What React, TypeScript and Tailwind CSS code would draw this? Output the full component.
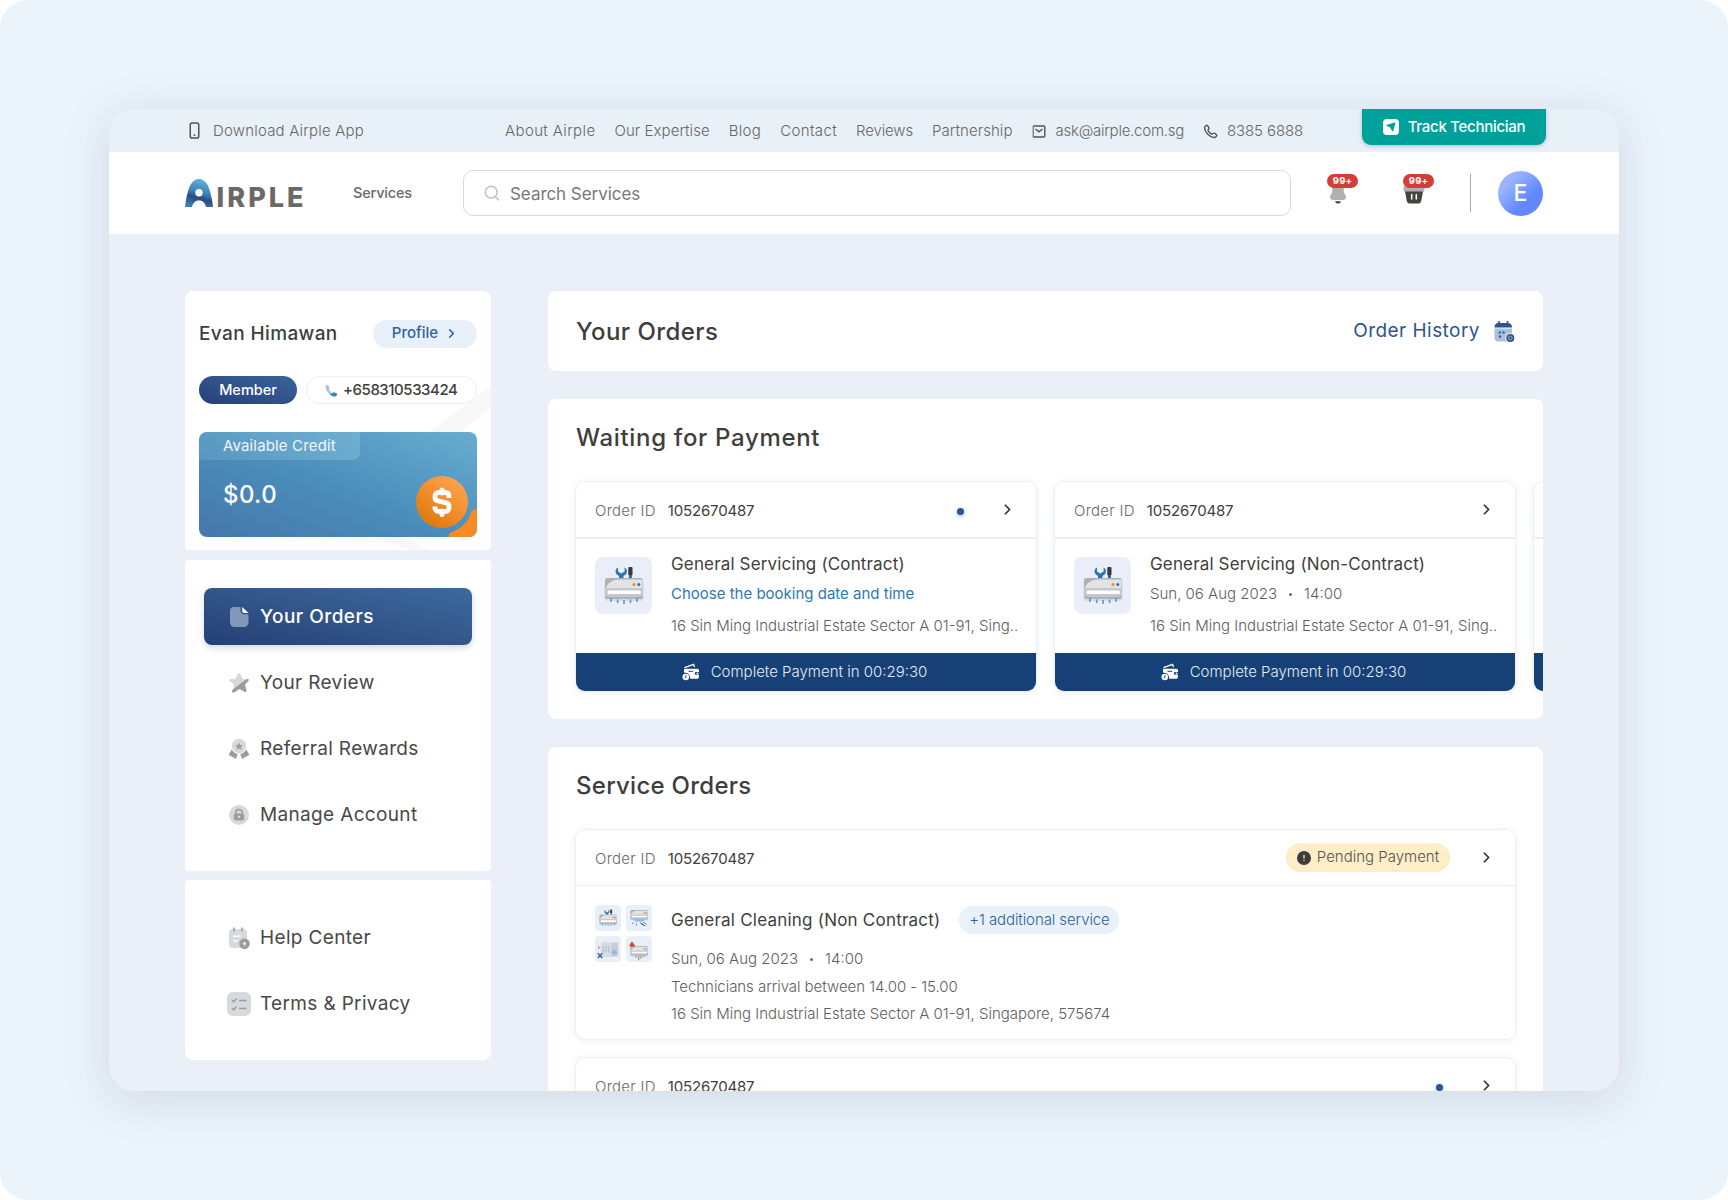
import React from 'react';
import { ChevronRight } from 'lucide-react';

interface OrderSummary {
  id: string;
  title: string;
  schedule: React.ReactNode;
  unread?: boolean;
}

const ORDER_ID = '1052670487';

const NAV_LINKS = [
  { label: 'About Airple', className: 'tracking-[0.025em]' },
  { label: 'Our Expertise', className: 'tracking-[0.004em]' },
  { label: 'Blog', className: 'tracking-[0.02em]' },
  { label: 'Contact', className: 'tracking-[0.025em]' },
  { label: 'Reviews', className: 'tracking-[-0.009em]' },
  { label: 'Partnership', className: 'tracking-[0.004em]' },
];

/* ---------- Icons ---------- */

const Logo = () => (
  <svg className="shrink-0" width="124" height="30" viewBox="0 0 124 30" fill="none">
    <defs>
      <linearGradient id="logo" x1="18" y1="0" x2="10" y2="29" gradientUnits="userSpaceOnUse">
        <stop stopColor="#6cb9d8" />
        <stop offset="0.5" stopColor="#3a80b8" />
        <stop offset="0.68" stopColor="#2b4a85" />
        <stop offset="1" stopColor="#3f7db4" />
      </linearGradient>
    </defs>
    <path
      fillRule="evenodd"
      d="M0 29C1 20 3 11 6 6C8 3 10.500 1 14 1S20 3 22 6C25 11 27 20 28 29H21C20 25 18 22.500 14 22.500S8 25 7 29ZM14 11A3.700 3.700 0 1 0 14 18.400A3.700 3.700 0 1 0 14 11Z"
      fill="url(#logo)"
    />
    <text x="31.500" y="28.500" fontSize="27" fontWeight="800" textLength="87" lengthAdjust="spacing" fill="#6b6967">
      IRPLE
    </text>
  </svg>
);

const PhoneDeviceIcon = () => (
  <svg width="11" height="17" viewBox="0 0 11 17" fill="none">
    <rect x="1.250" y="1" width="8.500" height="15" rx="1.800" stroke="#55534f" strokeWidth="1.500" />
    <circle cx="5.500" cy="13.200" r="0.900" fill="#55534f" />
  </svg>
);

const MailIcon = () => (
  <svg width="14" height="13" viewBox="0 0 14 13" fill="none" stroke="#55534f" strokeWidth="1.400">
    <path d="M1.200 1H11.800C12.400 1 12.800 1.400 12.800 2V11C12.800 11.600 12.400 12 11.800 12H1.200" />
    <path d="M1.200 1V12" strokeWidth="1" />
    <path d="M3.500 4L7 6.800L10.500 4" />
  </svg>
);

const HandsetIcon = () => (
  <svg width="15" height="15" viewBox="0 0 24 24" fill="none" stroke="#55534f" strokeWidth="2.200" strokeLinejoin="round">
    <path d="M3 4.500C4 2.500 5.500 1.500 6.500 2.200C8 3.300 9.500 5.500 9.500 6.800C9.500 8.300 7.500 8.500 8 10C8.800 12.300 11.500 15.200 13.800 16C15.500 16.500 15.700 14.500 17.200 14.500C18.500 14.500 21 16.300 21.900 17.600C22.600 18.700 21.300 20.500 19.500 21.200C12.500 23.500 0.500 11.500 3 4.500Z" />
  </svg>
);

const TrackIcon = () => (
  <svg width="16" height="16" viewBox="0 0 16 16">
    <rect width="16" height="16" rx="4" fill="#fff" />
    <path d="M11.700 3.600C12.200 3.500 12.500 3.800 12.400 4.300L10.200 12C10 12.600 9.300 12.600 9 12.100L7.600 9.200C7.400 8.800 7.100 8.500 6.700 8.300L3.900 7C3.300 6.700 3.300 6 4 5.800Z" fill="#00a19b" />
  </svg>
);

const SearchIcon = () => (
  <svg width="16" height="16" viewBox="0 0 16 16" fill="none" stroke="#bfc3c9" strokeWidth="1.500" strokeLinecap="round">
    <circle cx="7.200" cy="7.200" r="5.900" />
    <path d="M11.500 11.700L14.500 15" />
  </svg>
);

const BellIcon = () => (
  <svg width="18" height="20" viewBox="0 0 18 20">
    <path d="M3.500 1H14.500L14.800 7.500C15 9.500 17 11 17 13C17 15 15.500 16 13.500 16H4.500C2.500 16 1 15 1 13C1 11 3 9.500 3.200 7.500Z" fill="#b0b0b0" />
    <path d="M6 17.200H12C11.500 18.800 10.500 19.500 9 19.500S6.500 18.800 6 17.200Z" fill="#454341" />
  </svg>
);

const BasketIcon = () => (
  <svg width="22" height="20" viewBox="0 0 22 20">
    <rect x="0.500" y="1.500" width="21" height="6.500" rx="2" fill="#b0b0b0" />
    <path d="M2 7.500H20L18.300 16.500C18 18.400 17 19.500 15.500 19.500H6.500C5 19.500 4 18.400 3.700 16.500Z" fill="#454341" />
    <path d="M8.700 10.500V15M13.300 10.500V15" stroke="#fff" strokeWidth="1.600" strokeLinecap="round" />
  </svg>
);

const SmallPhoneIcon = () => (
  <svg width="13" height="13" viewBox="0 0 13 13">
    <path d="M0.500 3C0.500 1.200 2 0.300 3 1.200L4.400 3C5 4 3.800 4.600 4.100 5.400C4.700 6.700 6 8 7.300 8.900L4.700 10.200C2.500 8.500 0.600 5.500 0.500 3Z" fill="#b5c3d6" />
    <path d="M4.700 10.200L7.300 8.900C8.200 9.300 8.700 8 9.700 8.400L11.700 9.600C12.800 10.400 12 12 10.500 12.500C8.500 12.900 6.500 12 4.700 10.200Z" fill="#3c82bb" />
  </svg>
);

const CoinIcon = () => (
  <svg className="absolute right-0 bottom-0" width="68" height="66" viewBox="0 0 68 66">
    <defs>
      <linearGradient id="coin" x1="50" y1="8" x2="20" y2="50" gradientUnits="userSpaceOnUse">
        <stop stopColor="#f8a352" />
        <stop offset="0.400" stopColor="#f79434" />
        <stop offset="1" stopColor="#df7c12" />
      </linearGradient>
    </defs>
    <path d="M62.500 40.500C63.500 38.500 65 38 68 38.500V66H40.500C39 63.500 40.500 62 43 61C52.500 57.500 60 50 62.500 40.500Z" fill="#f68b25" />
    <circle cx="33" cy="31" r="26" fill="url(#coin)" />
    <path d="M40 27V25.500C40 22.800 38.500 21.500 36 21.500H30C27.500 21.500 26 23 26 25V26.500C26 28.500 27 29.500 28.800 29.900L37.200 31.800C39 32.200 40 33.300 40 35.200V36.800C40 39 38.500 40.400 36.300 40.400H29.800C27.500 40.400 26 39 26 36.800V35.500" fill="none" stroke="#fff" strokeWidth="4.800" />
    <path d="M33 19V22M33 40V43.500" stroke="#fff" strokeWidth="5" strokeLinecap="round" />
  </svg>
);

const DocIcon = () => (
  <svg width="24" height="24" viewBox="0 0 24 24">
    <path d="M7 2H13.500V5.500C13.500 8 15 9.300 17.500 9.300H21.500V17C21.500 20 19.500 22 16.500 22H8C5 22 3 20 3 17V6C3 3.500 4.500 2 7 2Z" fill="#8198bb" />
    <path d="M15.200 2L21.500 8H17.500C16 8 15.200 7.200 15.200 5.800Z" fill="#fff" />
  </svg>
);

const ReviewIcon = () => (
  <svg width="24" height="24" viewBox="0 0 24 24">
    <path d="M10.500 3C11.200 1.700 12.800 1.700 13.400 3L15.200 7.300C15.400 7.800 15.800 8 16.300 8L18 8.200L5.800 18.200L7 14.500C7.200 13.800 7 13.300 6.500 12.900L2.800 10.200C1.600 9.200 2.200 8 3.700 7.900L7.700 7.700C8.400 7.700 8.800 7.400 9 6.900Z" fill="#d6dadd" />
    <path d="M17.500 9.200C19.800 7.600 22 8 21.900 9C21.800 10.200 19 12.300 18.300 13.300C18 13.800 18 14.200 18.200 14.800L19.500 19C19.900 20.800 18.600 21.600 17.300 20.800L13.500 18.500C12.800 18.100 12.200 18.100 11.600 18.500L8.500 20.700C7 21.500 5 22 4.900 20.500C5 19.300 6 18.300 7.500 17Z" fill="#9c9c9c" />
  </svg>
);

const RewardIcon = () => (
  <svg width="24" height="24" viewBox="0 0 24 24">
    <path d="M5.500 12L10.500 16.500L8.500 21.500L6.500 20L2.200 17.800ZM18.500 12L13.500 16.500L15.500 21.500L17.500 20L21.800 17.800Z" fill="#9c9c9c" stroke="#9c9c9c" strokeLinejoin="round" />
    <circle cx="12" cy="9" r="7.700" fill="#d6dadd" stroke="#fff" strokeWidth="1" />
    <path d="M12 5.500L13.200 8L15.800 8.300L13.900 10.200L14.400 12.800L12 11.500L9.600 12.800L10.100 10.200L8.200 8.300L10.800 8Z" fill="#9c9c9c" />
  </svg>
);

const AccountIcon = () => (
  <svg width="24" height="24" viewBox="0 0 24 24">
    <circle cx="12" cy="12" r="10" fill="#d6dadd" />
    <path d="M8.700 11V9.500C8.700 7.500 10 6.400 12 6.400S15.300 7.500 15.300 9.500V11" fill="none" stroke="#9c9c9c" strokeWidth="1.500" />
    <rect x="6.800" y="10.500" width="10.400" height="7" rx="2" fill="#9c9c9c" />
    <circle cx="12" cy="13.900" r="1.200" fill="#d6dadd" />
  </svg>
);

const HelpIcon = () => (
  <svg width="24" height="24" viewBox="0 0 24 24">
    <rect x="2" y="3" width="18" height="19" rx="4" fill="#d6dadd" />
    <path d="M7 1.500V5.500M15 1.500V5.500" stroke="#9c9c9c" strokeWidth="1.600" />
    <path d="M6.500 10.200H13.500M6.500 15H10.500" stroke="#fff" strokeWidth="1.400" />
    <circle cx="17.500" cy="17.700" r="5.300" fill="#9c9c9c" />
    <path d="M17.500 16V19.400M15.800 17.700H19.200" stroke="#fff" strokeWidth="1.100" />
  </svg>
);

const TermsIcon = () => (
  <svg width="24" height="24" viewBox="0 0 24 24">
    <rect width="24" height="24" rx="6" fill="#d6dadd" />
    <path d="M5 8.300L6.800 9.800L9.500 6.500M5 16.300L6.800 17.800L9.500 14.500M12 8.500H19.500M12 16.500H19.500" fill="none" stroke="#9c9c9c" strokeWidth="1.500" />
  </svg>
);

const CalendarIcon = () => (
  <svg width="22" height="23" viewBox="0 0 22 23">
    <path d="M1.500 8.500H19V19C19 20.500 18 21.500 16.500 21.500H5C3 21.500 1.500 20 1.500 18Z" fill="#aac0d9" />
    <path d="M1.500 7.500C1.500 4.500 3 3 5.500 3H15C17.500 3 19 4.500 19 7.500Z" fill="#2d5488" />
    <path d="M6 1V4M14.500 1V4" stroke="#2d5488" strokeWidth="1.600" />
    <path d="M5.800 12.500H7.800M9.500 12.500H11.500M6 16.500H8" stroke="#2d5488" strokeWidth="1.800" />
    <circle cx="17.300" cy="18" r="4.800" fill="#fff" />
    <circle cx="17.300" cy="18" r="4" fill="#2d5488" />
    <circle cx="17.300" cy="18" r="1.900" fill="none" stroke="#aac0d9" strokeWidth="0.800" />
  </svg>
);

const WalletIcon = () => (
  <svg width="18" height="18" viewBox="0 0 18 18">
    <path d="M2.500 4.700L11.500 1.300L12.500 4" fill="none" stroke="#fff" strokeWidth="1.400" strokeLinejoin="round" />
    <path d="M3 5.800H15C16.400 5.800 17 6.500 17 7.500V9H14.500C13.300 9 12.800 9.700 12.800 10.400S13.300 11.800 14.500 11.800H17V13.500C17 15 16.200 15.800 15 15.800H8.300C8.300 12.200 6.500 10 3.500 9.700L2 9.500V6.800C2 6.100 2.300 5.800 3 5.800Z" fill="#fff" />
    <circle cx="15.500" cy="10.400" r="1" fill="#fff" />
    <path d="M6.500 8.300H11" stroke="#164076" strokeWidth="1" />
    <circle cx="3.800" cy="14" r="3.300" fill="#fff" />
    <path d="M3.900 12.300V14.200L2.800 15.300" fill="none" stroke="#164076" strokeWidth="1" />
  </svg>
);

const AlertIcon = () => (
  <svg width="14" height="14" viewBox="0 0 14 14">
    <circle cx="7" cy="7" r="7" fill="#3f3d3b" />
    <path d="M7 4V7.500M7 9V10" stroke="#feeecb" strokeWidth="1.300" />
  </svg>
);

const AirconBody = ({ y = 0 }: { y?: number }) => (
  <g transform={`translate(0 ${y})`}>
    <rect x="9.500" y="23" width="39" height="21" rx="3" fill="#c3cad8" opacity="0.500" />
    <rect x="10" y="21" width="38" height="21" rx="2.500" fill="#afb1b4" />
    <path d="M10.500 32C12.500 26 17 22.500 24 22.500H47.500V32Z" fill="#e2e3e4" />
    <path d="M10 31H48V39C46 40.500 12 40.500 10 39Z" fill="#c6c7c9" />
    <rect x="12.500" y="33.500" width="33.500" height="3.500" rx="1.500" fill="#fff" />
    <circle cx="39" cy="27.500" r="1.500" fill="#f28c28" />
    <circle cx="43.800" cy="27.500" r="1.500" fill="#2f6fab" />
  </g>
);

const ServicingArt = () => (
  <>
    <path d="M23 10.500C20 12 19.800 16 22.500 18L24 19V21.500H28.500V19L30 18C32.800 16 32.600 12 29.600 10.500V14.500L26.300 16.500L23 14.500Z" fill="#2f74ad" />
    <rect x="33.300" y="10" width="4.200" height="8.500" rx="1" fill="#3a3a3a" />
    <path d="M34 18H36.800V21.500H34Z" fill="#2f5f9b" />
    <AirconBody />
    <path d="M16 41V45M22.700 42.500V46M29 43V47M35.500 42.500V46M42 41V45" stroke="#5c9cc9" strokeWidth="1.700" />
  </>
);

const CleaningArt = () => (
  <>
    <AirconBody y={-10} />
    <path d="M15 31H43L36 36H22Z" fill="#8fb4f5" />
    <path d="M17 38L13 42M23 41V45M37 37L45 42M32 41L40 45" stroke="#4a7fd0" strokeWidth="2" />
    <path d="M32 39L42 46" stroke="#4b4b4b" strokeWidth="2" />
  </>
);

const RepairArt = () => (
  <>
    <rect x="14" y="14" width="37" height="31" rx="3" fill="#c9ccd1" />
    <rect x="12" y="16" width="24" height="27" fill="#dde1e6" />
    <path d="M18 20V38M24 18V38M30 20V38M16 25H34M16 32H34" stroke="#b3bfcd" strokeWidth="1.800" />
    <path d="M35 36H49M42 29V43M37 31L47 41M47 31L37 41" stroke="#7fb8e4" strokeWidth="2" />
    <path d="M6 38L16 48M16 38L6 48" stroke="#2f5f9b" strokeWidth="3" />
    <path d="M7 20L11 25L8 30Z" fill="#ee8a3b" />
  </>
);

const LeakArt = () => (
  <>
    <AirconBody y={1} />
    <path d="M8 22L13 13L19 22Z" fill="#d6402f" stroke="#d6402f" strokeWidth="2" strokeLinejoin="round" />
    <path d="M22 43V48M28 43V53M33 43V50M39 43V46" stroke="#8a8d91" strokeWidth="2.500" />
  </>
);

const ServiceThumb = ({ children, small = false }: { children: React.ReactNode; small?: boolean }) => (
  <svg
    className={small ? 'rounded bg-[#e9eff8]' : 'shrink-0 rounded-lg bg-[#e9eef8]'}
    width={small ? 26 : 57}
    height={small ? 26 : 57}
    viewBox="0 0 57 57"
  >
    {children}
  </svg>
);

/* ---------- Page header ---------- */

const TopBar = () => (
  <div className="flex h-[43px] items-center bg-[#e8f1f8] pl-[76px] text-[15px] font-light text-[#686664]">
    <div className="flex w-[320px] items-center pl-1">
      <PhoneDeviceIcon />
      <span className="ml-[13px] pt-px tracking-[0.013em]">Download Airple App</span>
    </div>
    <nav className="flex items-center gap-[19px] pt-px whitespace-nowrap">
      {NAV_LINKS.map((link) => (
        <a key={link.label} className={link.className}>
          {link.label}
        </a>
      ))}
      <span className="flex items-center gap-[10px] tracking-[-0.016em]">
        <MailIcon />
        ask@airple.com.sg
      </span>
      <span className="flex items-center gap-[9px] tracking-[-0.008em]">
        <HandsetIcon />
        8385 6888
      </span>
    </nav>
    <button className="mr-[73px] ml-auto flex h-[36px] w-[184px] items-center justify-center gap-[9px] self-start rounded-b-[9px] bg-[#00a19b] text-[15px] font-medium tracking-[-0.019em] text-white shadow-[0_1px_4px_rgba(40,80,120,0.3)]">
      <TrackIcon />
      Track Technician
    </button>
  </div>
);

const CountBadge = ({ className }: { className: string }) => (
  <span className={`absolute -top-[10px] flex h-[14px] w-[31px] items-center justify-center rounded-full bg-[#d03f36] text-[9.5px] font-bold tracking-wide text-white ${className}`}>
    99+
  </span>
);

const Header = () => (
  <header className="flex h-[82px] items-center bg-white pl-[76px]">
    <Logo />
    <a className="ml-[44px] w-[110px] text-[14.5px] font-medium tracking-[-0.012em] text-[#6b6967]">Services</a>
    <div className="flex h-[46px] w-[828px] items-center rounded-[10px] border border-[#d9dadd] pl-5 text-[17px] text-[#75787c]">
      <SearchIcon />
      <span className="ml-[10px] pt-[3px] tracking-[-0.003em]">Search Services</span>
    </div>
    <div className="relative mt-[2px] ml-[38px]">
      <BellIcon />
      <CountBadge className="-left-[2px]" />
    </div>
    <div className="relative mt-[2px] ml-[56px]">
      <BasketIcon />
      <CountBadge className="left-0" />
    </div>
    <div className="ml-[45px] h-[38px] w-px bg-[#a5a7ab]" />
    <div className="ml-[27px] flex size-[45px] items-center justify-center rounded-full bg-linear-to-br from-[#9bb3ff] from-25% to-[#6288ff] to-65% text-[23px] font-medium text-white">
      E
    </div>
  </header>
);

/* ---------- Sidebar ---------- */

const ProfileCard = () => (
  <section className="relative h-[259px] overflow-hidden rounded-t-lg rounded-b-[4px] bg-white px-[14px] pt-7">
    <svg className="absolute top-0 left-0" width="306" height="259" viewBox="0 0 306 259">
      <path d="M238 146L306 94V116L270 146ZM185 246L225 259H245L215 246Z" fill="#f8f8fa" />
    </svg>
    <div className="relative flex h-[29px] items-center justify-between">
      <h2 className="pt-px text-[19px] font-medium tracking-[0.02em] text-[#403e3c]">Evan Himawan</h2>
      <button className="flex h-7 w-[104px] items-center justify-center gap-[6px] rounded-full bg-[#e8f1f9] pl-px text-[15px] font-medium text-[#2e629d]">
        Profile
        <ChevronRight className="size-[15px]" strokeWidth={2.6} />
      </button>
    </div>
    <div className="relative mt-[28px] flex h-7 items-center gap-[9px]">
      <span className="flex h-7 w-[98px] items-center justify-center rounded-full bg-linear-to-tr from-[#27407a] to-[#3a6499] text-[14.5px] font-medium text-white">
        Member
      </span>
      <span className="flex h-7 flex-1 items-center rounded-full border border-[#eeeff1] bg-white pl-[18px] text-[15px] font-medium text-[#403e3c]">
        <SmallPhoneIcon />
        <span className="ml-[5px] tracking-[-0.03em]">+658310533424</span>
      </span>
    </div>
    <div className="relative mt-[28px] h-[105px] overflow-hidden rounded-lg bg-linear-to-tr from-[#4577ab] via-[#4a8cba] via-45% to-[#68add0] text-white">
      <div className="flex h-7 w-[161px] items-center rounded-br-lg bg-linear-to-r from-[#7ab8d6]/30 to-[#7ab8d6]/60 pl-6 text-[15px] tracking-[0.01em] text-white/90">
        Available Credit
      </div>
      <p className="mt-[17px] pl-6 text-[24px] leading-9 font-medium tracking-[0.016em]">$0.0</p>
      <CoinIcon />
    </div>
  </section>
);

const MenuItem = ({ icon, label, active = false }: { icon: React.ReactNode; label: string; active?: boolean }) => (
  <a
    className={
      active
        ? 'flex h-[57px] items-center gap-[9px] rounded-lg bg-linear-to-tr from-[#233f77] via-[#335689] to-[#3b6a9f] pl-[23px] text-[19px] font-medium tracking-[0.024em] text-white shadow-[0_3px_6px_rgba(50,90,140,0.22)]'
        : 'flex h-[57px] items-center gap-[9px] pl-[23px] text-[19px] tracking-[0.018em] text-[#4a4846]'
    }
  >
    {icon}
    <span className="pt-[2px]">{label}</span>
  </a>
);

const Sidebar = () => (
  <aside className="flex w-[306px] shrink-0 flex-col gap-[9px]">
    <ProfileCard />
    <nav className="mt-px flex h-[311px] flex-col gap-[9px] rounded-[4px] bg-white px-[19px] pt-7">
      <MenuItem icon={<DocIcon />} label="Your Orders" active />
      <MenuItem icon={<ReviewIcon />} label="Your Review" />
      <MenuItem icon={<RewardIcon />} label="Referral Rewards" />
      <MenuItem icon={<AccountIcon />} label="Manage Account" />
    </nav>
    <nav className="flex h-[180px] flex-col gap-[9px] rounded-t-[4px] rounded-b-lg bg-white px-[19px] pt-[29px]">
      <MenuItem icon={<HelpIcon />} label="Help Center" />
      <MenuItem icon={<TermsIcon />} label="Terms & Privacy" />
    </nav>
  </aside>
);

/* ---------- Orders ---------- */

const UnreadDot = () => (
  <span className="mt-[3px] mr-[35px] size-[7px] rounded-full bg-[#2d5488] shadow-[0_1px_4px_rgba(60,140,210,0.6)]" />
);

const OrderHeader = ({ id, className, children }: { id: string; className: string; children?: React.ReactNode }) => (
  <div className={`flex shrink-0 items-center border-[#eceff7] pr-5 pl-[19px] text-[15px] ${className}`}>
    <span className="pt-[4px] font-light tracking-[0.018em] text-[#6b6967]">Order ID</span>
    <span className="ml-3 pt-[4px] tracking-[-0.011em] text-[#403e3c]">{id}</span>
    <div className="ml-auto flex items-center">
      {children}
      <ChevronRight className="size-[17px] text-[#33312f]" strokeWidth={2.4} />
    </div>
  </div>
);

const DateTime = ({ date, time }: { date: string; time: string }) => (
  <>
    {date}
    <span className="mx-3 inline-block size-[3px] rounded-full bg-[#6b6967] align-middle" />
    {time}
  </>
);

const cardClass = 'border border-[#ebeff8] bg-white shadow-[0_1px_7px_rgba(90,110,170,0.11)]';

const PaymentCard = ({ order }: { order: OrderSummary }) => (
  <article className={`flex h-[211px] w-[462px] shrink-0 flex-col overflow-hidden rounded-[10px] ${cardClass}`}>
    <OrderHeader id={order.id} className="h-[57px] border-b-2">
      {order.unread && <UnreadDot />}
    </OrderHeader>
    <div className="flex flex-1 gap-[19px] pt-[18px] pl-[19px]">
      <ServiceThumb>
        <ServicingArt />
      </ServiceThumb>
      <div className="-mt-[5px] whitespace-nowrap">
        <h3 className="text-[17px] leading-6 tracking-[0.009em] text-[#403e3c]">{order.title}</h3>
        <div className="mt-[6px] text-[15px] leading-6 font-light text-[#605e5c]">{order.schedule}</div>
        <p className="mt-[8px] text-[15px] leading-6 font-light text-[#605e5c]">
          16 Sin Ming Industrial Estate Sector A 01-91, Sing..
        </p>
      </div>
    </div>
    <div className="flex h-[38px] items-center justify-center gap-[11px] bg-[#164076] pr-[3px] text-[15px] font-light text-[#e4ebf4]">
      <WalletIcon />
      Complete Payment in 00:29:30
    </div>
  </article>
);

const waitingOrders: OrderSummary[] = [
  {
    id: ORDER_ID,
    title: 'General Servicing (Contract)',
    schedule: <span className="font-normal text-[#2c79b3]">Choose the booking date and time</span>,
    unread: true,
  },
  {
    id: ORDER_ID,
    title: 'General Servicing (Non-Contract)',
    schedule: <DateTime date="Sun, 06 Aug 2023" time="14:00" />,
  },
];

const WaitingForPayment = () => (
  <section className="h-[320px] overflow-hidden rounded-lg bg-white pl-[27px]">
    <h2 className="flex h-[78px] items-center pl-px text-[24px] font-medium tracking-[0.028em] text-[#403e3c]">
      Waiting for Payment
    </h2>
    <div className="mt-1 flex gap-[17px]">
      {waitingOrders.map((order) => (
        <PaymentCard key={order.title} order={order} />
      ))}
      {/* next card peeks in from the scroll area */}
      <article className={`flex h-[211px] w-[462px] shrink-0 flex-col overflow-hidden rounded-[10px] ${cardClass}`}>
        <div className="h-[57px] border-b-2 border-[#eceff7]" />
        <div className="mt-auto h-[38px] bg-[#164076]" />
      </article>
    </div>
  </section>
);

const ServiceOrders = () => (
  <section className="h-[420px] rounded-lg bg-white px-[27px]">
    <h2 className="flex h-[76px] items-center pt-px pl-px text-[24px] font-medium tracking-[0.011em] text-[#403e3c]">
      Service Orders
    </h2>
    <article className={`mt-[6px] h-[211px] rounded-[10px] ${cardClass}`}>
      <OrderHeader id={ORDER_ID} className="h-[56px] border-b">
        <span className="mr-[28px] flex h-[29px] w-[164px] items-center justify-center gap-[6px] rounded-full bg-[#feeec8] text-[15px] font-light text-[#55534f]">
          <AlertIcon />
          Pending Payment
        </span>
      </OrderHeader>
      <div className="flex gap-[19px] pt-[19px] pl-[19px]">
        <div className="grid h-[57px] w-[57px] shrink-0 grid-cols-2 gap-[5px]">
          <ServiceThumb small>
            <ServicingArt />
          </ServiceThumb>
          <ServiceThumb small>
            <CleaningArt />
          </ServiceThumb>
          <ServiceThumb small>
            <RepairArt />
          </ServiceThumb>
          <ServiceThumb small>
            <LeakArt />
          </ServiceThumb>
        </div>
        <div className="text-[15px] leading-[27.5px] font-light text-[#605e5c]">
          <div className="mb-[11px] flex items-center">
            <h3 className="pt-[1px] text-[17px] leading-7 font-normal tracking-[0.013em] text-[#403e3c]">
              General Cleaning (Non Contract)
            </h3>
            <span className="ml-[19px] flex h-7 w-[160px] items-center justify-center rounded-full bg-[#e8f1f9] tracking-[-0.006em] text-[#2f5f9b]">
              +1 additional service
            </span>
          </div>
          <p>
            <DateTime date="Sun, 06 Aug 2023" time="14:00" />
          </p>
          <p className="tracking-[-0.003em]">Technicians arrival between 14.00 - 15.00</p>
          <p>16 Sin Ming Industrial Estate Sector A 01-91, Singapore, 575674</p>
        </div>
      </div>
    </article>
    <article className={`mt-[17px] h-[211px] rounded-[10px] ${cardClass}`}>
      <OrderHeader id={ORDER_ID} className="h-[56px] border-b">
        <UnreadDot />
      </OrderHeader>
    </article>
  </section>
);

export default function App() {
  return (
    <div className="h-[1200px] w-[1728px] overflow-hidden bg-white font-['Inter',sans-serif] antialiased">
      <div className="h-full rounded-[28px] bg-[#ebf3fb] px-[109px] pt-[109px]">
        <div className="h-[982px] w-[1510px] overflow-hidden rounded-[26px] bg-[#eaeff8] shadow-[0_8px_46px_rgba(70,95,120,0.17)]">
          <TopBar />
          <Header />
          <main className="flex gap-[57px] px-[76px] pt-[57px]">
            <Sidebar />
            <div className="flex w-[995px] shrink-0 flex-col gap-7">
              <section className="flex h-20 items-center justify-between rounded-lg bg-white pr-[28px] pl-[28px]">
                <h1 className="pt-[2px] text-[24px] font-medium tracking-[0.018em] text-[#403e3c]">Your Orders</h1>
                <a className="flex items-center gap-[13px] text-[19px] tracking-[0.024em] text-[#2c5590]">
                  Order History
                  <CalendarIcon />
                </a>
              </section>
              <WaitingForPayment />
              <ServiceOrders />
            </div>
          </main>
        </div>
      </div>
    </div>
  );
}
